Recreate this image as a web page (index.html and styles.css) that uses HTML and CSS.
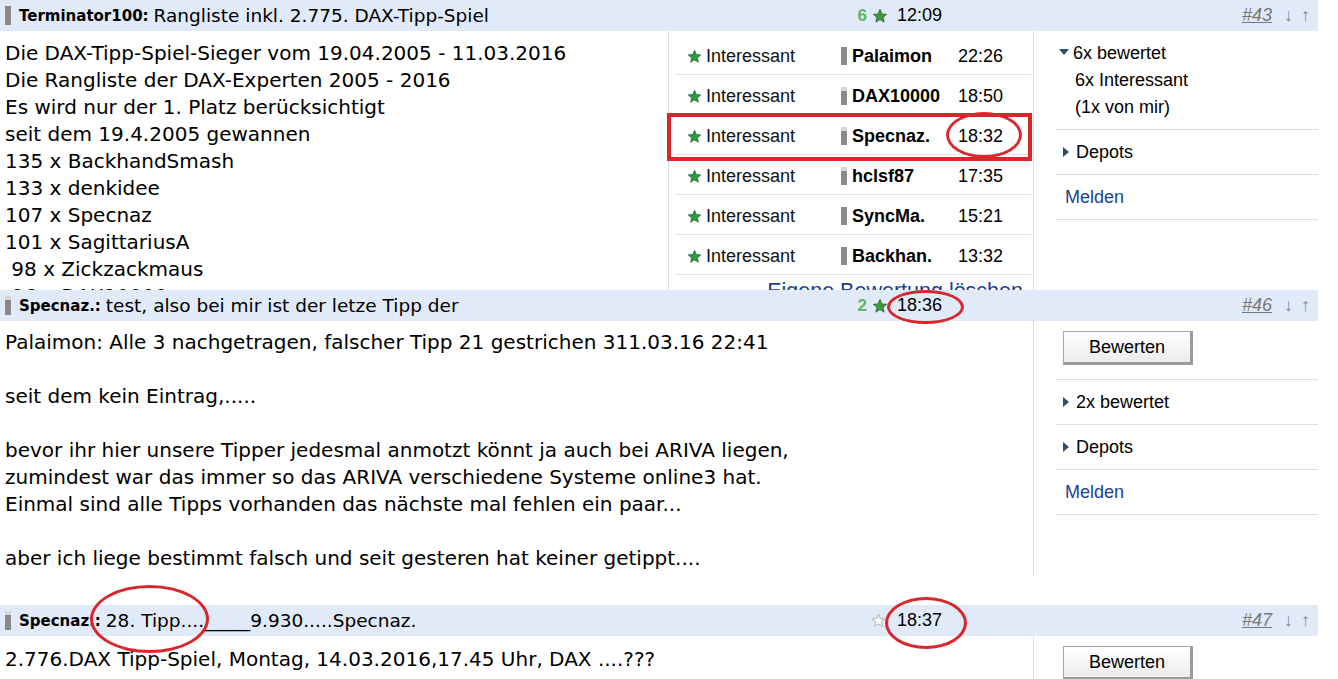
FILE: index.html
```html
<!DOCTYPE html>
<html lang="de">
<head>
  <meta charset="UTF-8" />
  <title>DAX-Tipp-Spiel</title>
  <link rel="stylesheet" href="styles.css">
</head>
<body>

<div class="thread">

  <!-- #43 -->
  <div class="post">
    <div class="post-head">
      <div class="subject"><span class="bar"></span><b>Terminator100:</b> Rangliste inkl. 2.775. DAX-Tipp-Spiel</div>
      <div class="score">6 <svg class="star" viewBox="0 0 24 24"><path d="M12 2l2.9 6.9 7.1.6-5.4 4.7 1.6 7-6.2-3.8-6.2 3.8 1.6-7L2 9.5l7.1-.6z"/></svg></div>
      <div class="time">12:09</div>
      <div class="nav"><a href="#">#43</a><span>↓</span><span>↑</span></div>
    </div>
    <div class="post-body first">
      <div class="text">Die DAX-Tipp-Spiel-Sieger vom 19.04.2005 - 11.03.2016
Die Rangliste der DAX-Experten 2005 - 2016
Es wird nur der 1. Platz berücksichtigt
seit dem 19.4.2005 gewannen
135 x BackhandSmash
133 x denkidee
107 x Specnaz
101 x SagittariusA
 98 x Zickzackmaus
 96 x DAX10000</div>

      <div class="ratings">
        <div class="rating-row">
          <span class="kind"><svg class="star small" viewBox="0 0 24 24"><path d="M12 2l2.9 6.9 7.1.6-5.4 4.7 1.6 7-6.2-3.8-6.2 3.8 1.6-7L2 9.5l7.1-.6z"/></svg>Interessant</span>
          <span class="who"><span class="bar"></span>Palaimon</span>
          <span class="when">22:26</span>
        </div>
        <div class="rating-row">
          <span class="kind"><svg class="star small" viewBox="0 0 24 24"><path d="M12 2l2.9 6.9 7.1.6-5.4 4.7 1.6 7-6.2-3.8-6.2 3.8 1.6-7L2 9.5l7.1-.6z"/></svg>Interessant</span>
          <span class="who"><span class="bar light"></span>DAX10000</span>
          <span class="when">18:50</span>
        </div>
        <div class="rating-row">
          <span class="kind"><svg class="star small" viewBox="0 0 24 24"><path d="M12 2l2.9 6.9 7.1.6-5.4 4.7 1.6 7-6.2-3.8-6.2 3.8 1.6-7L2 9.5l7.1-.6z"/></svg>Interessant</span>
          <span class="who"><span class="bar light"></span>Specnaz.</span>
          <span class="when">18:32</span>
        </div>
        <div class="rating-row">
          <span class="kind"><svg class="star small" viewBox="0 0 24 24"><path d="M12 2l2.9 6.9 7.1.6-5.4 4.7 1.6 7-6.2-3.8-6.2 3.8 1.6-7L2 9.5l7.1-.6z"/></svg>Interessant</span>
          <span class="who"><span class="bar light"></span>hclsf87</span>
          <span class="when">17:35</span>
        </div>
        <div class="rating-row">
          <span class="kind"><svg class="star small" viewBox="0 0 24 24"><path d="M12 2l2.9 6.9 7.1.6-5.4 4.7 1.6 7-6.2-3.8-6.2 3.8 1.6-7L2 9.5l7.1-.6z"/></svg>Interessant</span>
          <span class="who"><span class="bar"></span>SyncMa.</span>
          <span class="when">15:21</span>
        </div>
        <div class="rating-row">
          <span class="kind"><svg class="star small" viewBox="0 0 24 24"><path d="M12 2l2.9 6.9 7.1.6-5.4 4.7 1.6 7-6.2-3.8-6.2 3.8 1.6-7L2 9.5l7.1-.6z"/></svg>Interessant</span>
          <span class="who"><span class="bar"></span>Backhan.</span>
          <span class="when">13:32</span>
        </div>
        <a class="delete" href="#">Eigene Bewertung löschen</a>
      </div>

      <div class="side">
        <div class="side-item open">
          <div class="toggle"><span class="tri down"></span>6x bewertet</div>
          <div class="sub">6x Interessant<br>(1x von mir)</div>
        </div>
        <div class="side-item"><span class="tri"></span>Depots</div>
        <div class="side-item"><a href="#">Melden</a></div>
      </div>
    </div>
  </div>

  <!-- #46 -->
  <div class="post">
    <div class="post-head">
      <div class="subject"><span class="bar light"></span><b>Specnaz.:</b> test, also bei mir ist der letze Tipp der</div>
      <div class="score">2 <svg class="star" viewBox="0 0 24 24"><path d="M12 2l2.9 6.9 7.1.6-5.4 4.7 1.6 7-6.2-3.8-6.2 3.8 1.6-7L2 9.5l7.1-.6z"/></svg></div>
      <div class="time">18:36</div>
      <div class="nav"><a href="#">#46</a><span>↓</span><span>↑</span></div>
    </div>
    <div class="post-body second">
      <div class="text">Palaimon: Alle 3 nachgetragen, falscher Tipp 21 gestrichen 311.03.16 22:41

seit dem kein Eintrag,.....

bevor ihr hier unsere Tipper jedesmal anmotzt könnt ja auch bei ARIVA liegen,
zumindest war das immer so das ARIVA verschiedene Systeme online3 hat.
Einmal sind alle Tipps vorhanden das nächste mal fehlen ein paar...

aber ich liege bestimmt falsch und seit gesteren hat keiner getippt....</div>
      <div class="side">
        <div class="side-item button-item"><button>Bewerten</button></div>
        <div class="side-item"><span class="tri"></span>2x bewertet</div>
        <div class="side-item"><span class="tri"></span>Depots</div>
        <div class="side-item"><a href="#">Melden</a></div>
      </div>
    </div>
  </div>

  <!-- #47 -->
  <div class="post">
    <div class="post-head">
      <div class="subject"><span class="bar light"></span><b>Specnaz.:</b> 28. Tipp...._____9.930.....Specnaz.</div>
      <div class="score"><svg class="star empty" viewBox="0 0 24 24"><path d="M12 2l2.9 6.9 7.1.6-5.4 4.7 1.6 7-6.2-3.8-6.2 3.8 1.6-7L2 9.5l7.1-.6z"/></svg></div>
      <div class="time">18:37</div>
      <div class="nav"><a href="#">#47</a><span>↓</span><span>↑</span></div>
    </div>
    <div class="post-body third">
      <div class="text">2.776.DAX Tipp-Spiel, Montag, 14.03.2016,17.45 Uhr, DAX ....???</div>
      <div class="side">
        <div class="side-item button-item"><button>Bewerten</button></div>
      </div>
    </div>
  </div>

  <!-- red annotations drawn over the screenshot -->
  <div class="mark box"></div>
  <div class="mark ring ring-a"></div>
  <div class="mark ring ring-b"></div>
  <div class="mark ring ring-c"></div>
  <div class="mark ring ring-d"></div>
</div>

</body>
</html>
```

FILE: styles.css
```css
body {
  margin: 0;
  background: #fff;
  color: #000;
  font-family: "DejaVu Sans", Verdana, sans-serif;
}

.thread {
  position: relative;
  width: 1318px;
}

/* header bar of a post */
.post-head {
  display: grid;
  grid-template-columns: 846px 42px 1fr auto;
  align-items: center;
  height: 31px;
  background: #e1eaf8;
  font-size: 18.5px;
  white-space: nowrap;
}

.subject {
  display: flex;
  align-items: center;
  padding-left: 5px;
}

.subject b {
  font-size: 15px;
  margin: 0 5px 0 8px;
}

.bar {
  display: inline-block;
  width: 6px;
  height: 19px;
  background: #8a8a8a;
}

.bar.light {
  background: linear-gradient(#d6d6d6 0 4px, #8a8a8a 4px);
}

.score {
  display: flex;
  justify-content: flex-end;
  align-items: center;
  gap: 5px;
  font-family: "Liberation Sans", Arial, sans-serif;
  font-weight: bold;
  font-size: 17px;
  color: #5cb85c;
}

.star {
  width: 16px;
  height: 16px;
  fill: #3f9a3f;
  stroke: #1f6a2a;
  stroke-width: 1.2;
}

.star.small {
  width: 15px;
  height: 15px;
  margin-right: 4px;
  fill: #2e9a44;
  stroke: #1a6a2c;
}

.star.empty {
  width: 15px;
  height: 15px;
  margin-right: 2px;
  fill: #fafafa;
  stroke: #b4b4b4;
  stroke-width: 1.6;
}

.time {
  padding-left: 9px;
  font-family: "Liberation Sans", Arial, sans-serif;
  font-size: 18px;
}

.nav {
  display: flex;
  gap: 8px;
  padding-right: 8px;
  font-family: "Liberation Sans", Arial, sans-serif;
  font-size: 18px;
  color: #7f8b9a;
}

.nav a {
  color: #777;
  font-style: italic;
  margin-right: 4px;
}

/* body of a post */
.post-body {
  display: grid;
  grid-template-columns: 1033px 1fr;
  overflow: hidden;
}

.post-body.first {
  grid-template-columns: 668px 365px 1fr;
  height: 259px;
}

.post-body.second {
  height: 254px;
  margin-bottom: 30px;
}

.post-body.third {
  height: 60px;
}

.text {
  padding: 9px 5px 7px;
  font-size: 20px;
  line-height: 27px;
  white-space: pre-wrap;
}

.second .text {
  padding-top: 8px;
}

.third .text {
  padding-top: 10px;
}

/* rating list */
.ratings {
  border-left: 1px solid #ddd;
  padding: 4px 2px 0 6px;
  font-family: "Liberation Sans", Arial, sans-serif;
  font-size: 18px;
}

.rating-row {
  display: grid;
  grid-template-columns: 166px 117px auto;
  align-items: center;
  height: 40px;
  padding-top: 3px;
  border-bottom: 1px solid #e4e4e4;
  box-sizing: border-box;
}

.kind {
  display: flex;
  align-items: center;
  padding-left: 12px;
  color: #111;
}

.who {
  display: flex;
  align-items: center;
  gap: 5px;
  font-weight: bold;
}

.who .bar {
  height: 18px;
}

.delete {
  display: block;
  padding: 4px 8px 0 0;
  text-align: right;
  font-size: 21.5px;
  color: #1c3f94;
  text-decoration: none;
}

/* right column */
.side {
  border-left: 1px solid #ddd;
  padding-left: 22px;
  font-family: "Liberation Sans", Arial, sans-serif;
  font-size: 18px;
}

.side-item {
  display: flex;
  align-items: center;
  height: 45px;
  padding-left: 7px;
  border-bottom: 1px solid #dedede;
  box-sizing: border-box;
}

.side-item.open {
  display: block;
  height: auto;
  padding: 9px 0 8px 7px;
  line-height: 27px;
}

.side-item .sub {
  padding-left: 12px;
}

.side-item a {
  color: #1c3f94;
  text-decoration: none;
  padding-left: 2px;
}

.tri {
  width: 0;
  height: 0;
  margin-right: 7px;
  border-top: 5px solid transparent;
  border-bottom: 5px solid transparent;
  border-left: 6px solid #2f4d6e;
}

.tri.down {
  display: inline-block;
  vertical-align: middle;
  margin: 0 4px 4px -4px;
  border-left: 5px solid transparent;
  border-right: 5px solid transparent;
  border-top: 6px solid #2f4d6e;
  border-bottom: 0;
}

.button-item {
  height: 59px;
  padding: 10px 0 0 7px;
  align-items: flex-start;
}

button {
  width: 130px;
  height: 34px;
  font-family: "Liberation Sans", Arial, sans-serif;
  font-size: 18px;
  color: #000;
  background: linear-gradient(#ffffff, #ececec);
  border: 1px solid #a8a8a8;
  border-right: 3px solid #9c9c9c;
  border-bottom: 3px solid #9c9c9c;
}

.third .button-item {
  border-bottom: 0;
}

/* red annotations */
.mark {
  position: absolute;
  box-sizing: border-box;
  border: 4px solid #d9272d;
  pointer-events: none;
}

.box {
  left: 667px;
  top: 113px;
  width: 365px;
  height: 48px;
}

.ring {
  border-width: 3px;
  border-radius: 50%;
}

.ring-a {
  left: 946px;
  top: 112px;
  width: 76px;
  height: 46px;
}

.ring-b {
  left: 887px;
  top: 290px;
  width: 77px;
  height: 34px;
}

.ring-c {
  left: 885px;
  top: 597px;
  width: 82px;
  height: 52px;
}

.ring-d {
  left: 90px;
  top: 585px;
  width: 119px;
  height: 68px;
}
```
